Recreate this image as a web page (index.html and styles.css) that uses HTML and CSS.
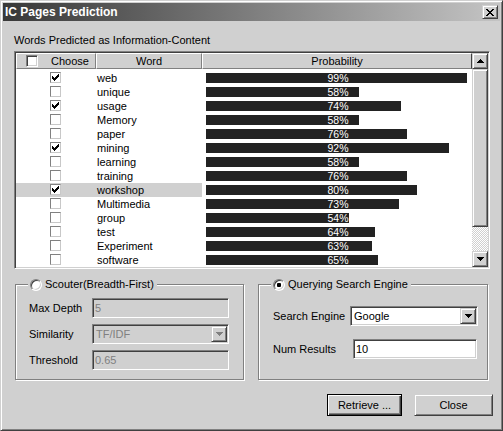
FILE: index.html
```html
<!DOCTYPE html>
<html>
<head>
<meta charset="utf-8">
<link rel="stylesheet" href="styles.css">
</head>
<body>
<div class="window">
  <div class="titlebar">
    <span class="title">IC Pages Prediction</span>
    <div class="close-btn">
      <svg width="8" height="7" viewBox="0 0 8 7" shape-rendering="crispEdges"><path d="M0 0h2v1H0zM6 0h2v1H6zM1 1h2v1H1zM5 1h2v1H5zM2 2h4v1H2zM3 3h2v1H3zM2 4h4v1H2zM1 5h2v1H1zM5 5h2v1H5zM0 6h2v1H0zM6 6h2v1H6z" fill="#000"/></svg>
    </div>
  </div>
  <div class="client">
    <div class="caption">Words Predicted as Information-Content</div>
    <div class="listview">
      <div class="list-main">
        <div class="header">
          <div class="hcell hc-choose"><span class="hchk"></span><span class="hc-label">Choose</span></div>
          <div class="hcell hc-word">Word</div>
          <div class="hcell hc-prob">Probability</div>
        </div>
        <div class="rows">
          <div class="row"><div class="c-choose"><span class="chk on"><svg width="7" height="7" viewBox="0 0 7 7" shape-rendering="crispEdges"><path d="M0 2h1v3H0zM1 3h1v3H1zM2 4h1v3H2zM3 3h1v3H3zM4 2h1v3H4zM5 1h1v3H5zM6 0h1v3H6z" fill="#000"/></svg></span></div><div class="c-word">web</div><div class="c-prob"><div class="bar" style="width:261px"></div><span class="pct">99%</span></div></div>
          <div class="row"><div class="c-choose"><span class="chk"></span></div><div class="c-word">unique</div><div class="c-prob"><div class="bar" style="width:153px"></div><span class="pct">58%</span></div></div>
          <div class="row"><div class="c-choose"><span class="chk on"><svg width="7" height="7" viewBox="0 0 7 7" shape-rendering="crispEdges"><path d="M0 2h1v3H0zM1 3h1v3H1zM2 4h1v3H2zM3 3h1v3H3zM4 2h1v3H4zM5 1h1v3H5zM6 0h1v3H6z" fill="#000"/></svg></span></div><div class="c-word">usage</div><div class="c-prob"><div class="bar" style="width:195px"></div><span class="pct">74%</span></div></div>
          <div class="row"><div class="c-choose"><span class="chk"></span></div><div class="c-word">Memory</div><div class="c-prob"><div class="bar" style="width:153px"></div><span class="pct">58%</span></div></div>
          <div class="row"><div class="c-choose"><span class="chk"></span></div><div class="c-word">paper</div><div class="c-prob"><div class="bar" style="width:201px"></div><span class="pct">76%</span></div></div>
          <div class="row"><div class="c-choose"><span class="chk on"><svg width="7" height="7" viewBox="0 0 7 7" shape-rendering="crispEdges"><path d="M0 2h1v3H0zM1 3h1v3H1zM2 4h1v3H2zM3 3h1v3H3zM4 2h1v3H4zM5 1h1v3H5zM6 0h1v3H6z" fill="#000"/></svg></span></div><div class="c-word">mining</div><div class="c-prob"><div class="bar" style="width:243px"></div><span class="pct">92%</span></div></div>
          <div class="row"><div class="c-choose"><span class="chk"></span></div><div class="c-word">learning</div><div class="c-prob"><div class="bar" style="width:153px"></div><span class="pct">58%</span></div></div>
          <div class="row"><div class="c-choose"><span class="chk"></span></div><div class="c-word">training</div><div class="c-prob"><div class="bar" style="width:201px"></div><span class="pct">76%</span></div></div>
          <div class="row selected"><div class="c-choose"><span class="chk on"><svg width="7" height="7" viewBox="0 0 7 7" shape-rendering="crispEdges"><path d="M0 2h1v3H0zM1 3h1v3H1zM2 4h1v3H2zM3 3h1v3H3zM4 2h1v3H4zM5 1h1v3H5zM6 0h1v3H6z" fill="#000"/></svg></span></div><div class="c-word">workshop</div><div class="c-prob"><div class="bar" style="width:211px"></div><span class="pct">80%</span></div></div>
          <div class="row"><div class="c-choose"><span class="chk"></span></div><div class="c-word">Multimedia</div><div class="c-prob"><div class="bar" style="width:193px"></div><span class="pct">73%</span></div></div>
          <div class="row"><div class="c-choose"><span class="chk"></span></div><div class="c-word">group</div><div class="c-prob"><div class="bar" style="width:143px"></div><span class="pct">54%</span></div></div>
          <div class="row"><div class="c-choose"><span class="chk"></span></div><div class="c-word">test</div><div class="c-prob"><div class="bar" style="width:169px"></div><span class="pct">64%</span></div></div>
          <div class="row"><div class="c-choose"><span class="chk"></span></div><div class="c-word">Experiment</div><div class="c-prob"><div class="bar" style="width:166px"></div><span class="pct">63%</span></div></div>
          <div class="row"><div class="c-choose"><span class="chk"></span></div><div class="c-word">software</div><div class="c-prob"><div class="bar" style="width:172px"></div><span class="pct">65%</span></div></div>
        </div>
      </div>
      <div class="vscroll">
        <div class="sb-btn"><svg width="7" height="4" viewBox="0 0 7 4" shape-rendering="crispEdges"><path d="M3 0h1v1H3zM2 1h3v1H2zM1 2h5v1H1zM0 3h7v1H0z" fill="#000"/></svg></div>
        <div class="sb-thumb"></div>
        <div class="sb-track"></div>
        <div class="sb-btn"><svg width="7" height="4" viewBox="0 0 7 4" shape-rendering="crispEdges"><path d="M0 0h7v1H0zM1 1h5v1H1zM2 2h3v1H2zM3 3h1v1H3z" fill="#000"/></svg></div>
      </div>
    </div>
    <div class="groups">
      <fieldset class="group g-left">
        <legend class="legend"><span class="radio"></span><span>Scouter(Breadth-First)</span></legend>
        <div class="form">
          <div class="frow"><span class="flabel l-left">Max Depth</span><div class="field disabled w-left">5</div></div>
          <div class="frow"><span class="flabel l-left">Similarity</span><div class="field combo disabled w-left"><span class="combo-text">TF/IDF</span><span class="drop"><svg width="7" height="4" viewBox="0 0 7 4" shape-rendering="crispEdges"><path d="M0 0h7v1H0zM1 1h5v1H1zM2 2h3v1H2zM3 3h1v1H3z" fill="#808080"/></svg></span></div></div>
          <div class="frow"><span class="flabel l-left">Threshold</span><div class="field disabled w-left">0.65</div></div>
        </div>
      </fieldset>
      <fieldset class="group g-right">
        <legend class="legend"><span class="radio on"></span><span>Querying Search Engine</span></legend>
        <div class="form form-right">
          <div class="frow"><span class="flabel l-right1">Search Engine</span><div class="field combo w-combo"><span class="combo-text">Google</span><span class="drop"><svg width="7" height="4" viewBox="0 0 7 4" shape-rendering="crispEdges"><path d="M0 0h7v1H0zM1 1h5v1H1zM2 2h3v1H2zM3 3h1v1H3z" fill="#000"/></svg></span></div></div>
          <div class="frow"><span class="flabel l-right2">Num Results</span><div class="field w-num">10</div></div>
        </div>
      </fieldset>
    </div>
    <div class="buttons">
      <div class="btn default w-retrieve">Retrieve ...</div>
      <div class="btn w-close">Close</div>
    </div>
  </div>
</div>
</body>
</html>
```
FILE: styles.css
```css
* { box-sizing: border-box; }
html, body { margin: 0; padding: 0; background: #d0d0d0; }
body {
  font-family: "Liberation Sans", Arial, sans-serif;
  font-size: 11px;
  line-height: 13px;
  color: #000;
}
.window {
  width: 503px;
  height: 431px;
  border: 1px solid;
  border-color: #d0d0d0 #404040 #404040 #d0d0d0;
  box-shadow: inset 1px 1px 0 #fff, inset -1px -1px 0 #808080;
  padding: 2px;
  background: #d0d0d0;
}
.titlebar {
  height: 18px;
  display: flex;
  align-items: center;
  justify-content: space-between;
  padding: 0 2px 0 2px;
  background: linear-gradient(to right, #383838, #c4c4c4);
}
.title {
  color: #fff;
  font-weight: bold;
  font-size: 12px;
}
.close-btn {
  width: 16px;
  height: 14px;
  display: flex;
  align-items: center;
  justify-content: center;
  background: #d0d0d0;
  border: 1px solid;
  border-color: #d0d0d0 #404040 #404040 #d0d0d0;
  box-shadow: inset 1px 1px 0 #fff, inset -1px -1px 0 #808080;
}
.client {
  padding: 13px 10px 0 11px;
}
.caption {
  height: 13px;
  margin-bottom: 4px;
}
.listview {
  width: 476px;
  height: 218px;
  display: flex;
  border: 1px solid;
  border-color: #808080 #fff #fff #808080;
  box-shadow: inset 1px 1px 0 #404040, inset -1px -1px 0 #d0d0d0;
  padding: 1px;
  background: #fff;
}
.list-main {
  width: 456px;
  display: flex;
  flex-direction: column;
}
.header {
  display: flex;
  height: 16px;
}
.hcell {
  height: 16px;
  background: #d0d0d0;
  border-top: 1px solid #fff;
  border-left: 1px solid #fff;
  border-right: 1px solid #808080;
  border-bottom: 1px solid #808080;
  display: flex;
  align-items: center;
  justify-content: center;
}
.hc-choose { width: 80px; justify-content: flex-start; padding-left: 9px; }
.hc-label { margin-left: 13px; }
.hc-word { width: 106px; }
.hc-prob { width: 270px; border-right-color: #404040; }
.hchk {
  width: 12px;
  height: 12px;
  background: #fff;
  border: 1px solid;
  border-color: #808080 #fff #fff #808080;
  box-shadow: inset 1px 1px 0 #404040, inset -1px -1px 0 #d0d0d0;
}
.rows {
  padding-top: 2px;
  display: flex;
  flex-direction: column;
}
.row {
  display: flex;
  height: 14px;
  line-height: 14px;
}
.c-choose {
  width: 80px;
  padding-left: 34px;
  display: flex;
  align-items: flex-start;
}
.c-word {
  width: 106px;
  padding-left: 1px;
  white-space: nowrap;
}
.row.selected .c-choose,
.row.selected .c-word { background: #d0d0d0; }
.chk {
  width: 11px;
  height: 11px;
  margin-top: 1px;
  background: #fff;
  border: 1px solid;
  border-color: #808080 #c8c8c8 #c8c8c8 #808080;
  display: flex;
  align-items: center;
  justify-content: center;
}
.c-prob {
  width: 270px;
  padding-left: 4px;
  display: grid;
  grid-template-columns: 264px;
  align-items: center;
}
.bar {
  grid-area: 1 / 1;
  height: 10px;
  background: #222;
}
.pct {
  grid-area: 1 / 1;
  justify-self: center;
  color: #fff;
  font-size: 10.5px;
  line-height: 14px;
}
.vscroll {
  width: 16px;
  display: flex;
  flex-direction: column;
}
.sb-btn {
  width: 16px;
  height: 16px;
  display: flex;
  align-items: center;
  justify-content: center;
  background: #d0d0d0;
  border: 1px solid;
  border-color: #d0d0d0 #404040 #404040 #d0d0d0;
  box-shadow: inset 1px 1px 0 #fff, inset -1px -1px 0 #808080;
}
.sb-thumb {
  height: 158px;
  background: #d0d0d0;
  border: 1px solid;
  border-color: #d0d0d0 #404040 #404040 #d0d0d0;
  box-shadow: inset 1px 1px 0 #fff, inset -1px -1px 0 #808080;
}
.sb-track {
  flex: 1;
  background: repeating-conic-gradient(#fff 0 25%, #d0d0d0 0 50%);
  background-size: 2px 2px;
}
.groups {
  display: flex;
  gap: 14px;
  margin-top: 9px;
  padding-left: 1px;
}
.group {
  margin: 0;
  padding: 0;
  border: 1px solid #808080;
  box-shadow: 1px 1px 0 #fff, inset 1px 1px 0 #fff;
  min-width: 0;
}
.g-left { width: 229px; }
.g-right { width: 230px; }
.legend {
  margin-left: 12px;
  padding: 0 3px 0 2px;
  display: flex;
  align-items: center;
  gap: 3px;
  height: 13px;
  background: #d0d0d0;
}
.radio {
  width: 12px;
  height: 12px;
  border-radius: 50%;
  background: #fff;
  border: 1px solid;
  border-color: #808080 #fff #fff #808080;
  box-shadow: inset 1px 1px 0 #404040, inset -1px -1px 0 #d0d0d0;
}
.radio.on {
  background: radial-gradient(circle, #000 0 2px, #fff 2.5px);
}
.form {
  padding: 7px 0 9px 13px;
  display: flex;
  flex-direction: column;
  gap: 6px;
}
.form-right {
  padding: 15px 0 20px 14px;
  gap: 13px;
}
.frow {
  display: flex;
  align-items: center;
}
.flabel { flex: none; }
.l-left { width: 63px; }
.l-right1 { width: 77px; }
.l-right2 { width: 80px; }
.field {
  height: 20px;
  background: #fff;
  border: 1px solid;
  border-color: #808080 #fff #fff #808080;
  box-shadow: inset 1px 1px 0 #404040, inset -1px -1px 0 #d0d0d0;
  padding: 0 2px;
  display: flex;
  align-items: center;
}
.field.disabled {
  background: #d0d0d0;
  color: #808080;
}
.w-left { width: 137px; }
.w-combo { width: 128px; }
.w-num { width: 124px; }
.combo {
  padding: 1px;
  justify-content: space-between;
}
.combo-text { padding-left: 2px; }
.drop {
  width: 16px;
  height: 16px;
  display: flex;
  align-items: center;
  justify-content: center;
  background: #d0d0d0;
  border: 1px solid;
  border-color: #d0d0d0 #404040 #404040 #d0d0d0;
  box-shadow: inset 1px 1px 0 #fff, inset -1px -1px 0 #808080;
}
.buttons {
  display: flex;
  justify-content: flex-end;
  gap: 12px;
  margin-top: 14px;
  padding-right: 7px;
  margin-right: -10px;
}
.btn {
  height: 22px;
  display: flex;
  align-items: center;
  justify-content: center;
  background: #d0d0d0;
  border: 1px solid;
  border-color: #d0d0d0 #404040 #404040 #d0d0d0;
  box-shadow: inset 1px 1px 0 #fff, inset -1px -1px 0 #808080;
}
.btn.default {
  border-color: #000;
  box-shadow: inset 1px 1px 0 #fff, inset -1px -1px 0 #404040, inset -2px -2px 0 #808080;
}
.w-retrieve { width: 75px; }
.w-close { width: 79px; }
```
